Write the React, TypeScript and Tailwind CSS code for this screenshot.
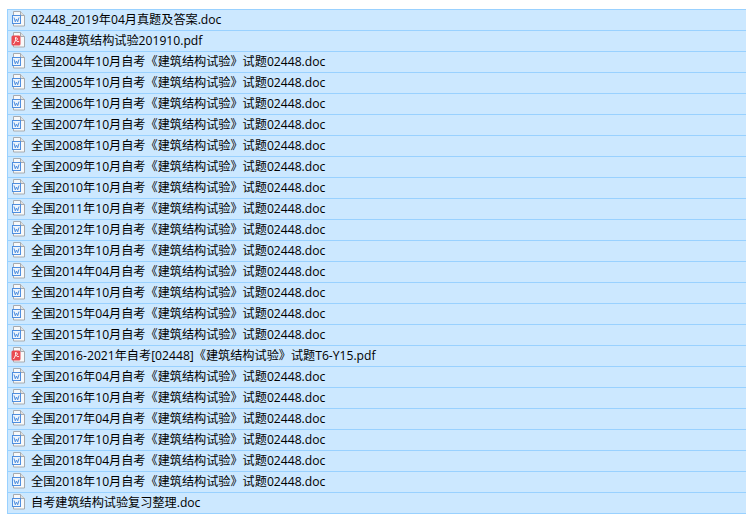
import React from 'react';

type FileRow = { name: string; kind: 'doc' | 'pdf' };

const exam = (term: string): FileRow => ({
  name: `全国${term}自考《建筑结构试验》试题02448.doc`,
  kind: 'doc',
});

const files: FileRow[] = [
  { name: '02448_2019年04月真题及答案.doc', kind: 'doc' },
  { name: '02448建筑结构试验201910.pdf', kind: 'pdf' },
  exam('2004年10月'),
  exam('2005年10月'),
  exam('2006年10月'),
  exam('2007年10月'),
  exam('2008年10月'),
  exam('2009年10月'),
  exam('2010年10月'),
  exam('2011年10月'),
  exam('2012年10月'),
  exam('2013年10月'),
  exam('2014年04月'),
  exam('2014年10月'),
  exam('2015年04月'),
  exam('2015年10月'),
  { name: '全国2016-2021年自考[02448]《建筑结构试验》试题T6-Y15.pdf', kind: 'pdf' },
  exam('2016年04月'),
  exam('2016年10月'),
  exam('2017年04月'),
  exam('2017年10月'),
  exam('2018年04月'),
  exam('2018年10月'),
  { name: '自考建筑结构试验复习整理.doc', kind: 'doc' },
];

const DocIcon = () => (
  <svg width="16" height="16" viewBox="0 0 16 16" className="mb-[2px] shrink-0">
    <path d="M3.5 0.5H10.5L14.5 4.5V15H3.5Z" fill="#f8f9fa" stroke="#a6aaaf" />
    <path d="M10.5 0.5V4.5H14.5" fill="#dfe1e3" stroke="#a6aaaf" />
    <rect x="2.5" y="4.5" width="8" height="8" fill="#eef5fc" stroke="#4f8fe0" />
    <path d="M4 6.5L5.3 10.8L6.5 8L7.7 10.8L9 6.5" fill="none" stroke="#4f8fe0" strokeWidth="1" />
  </svg>
);

const PdfIcon = () => (
  <svg width="16" height="16" viewBox="0 0 16 16" className="mb-[2px] shrink-0">
    <path d="M3.5 0.5H10.5L14.5 4.5V15H3.5Z" fill="#f8f9fa" stroke="#a6aaaf" />
    <path d="M10.5 0.5V4.5H14.5" fill="#dfe1e3" stroke="#a6aaaf" />
    <rect x="1.5" y="3.5" width="9" height="10" rx="1.5" fill="#ea4a52" />
    <path d="M3.5 12C5 10 6 8 5.5 5.5C7.5 5.5 7.8 7.5 6.5 8.5C6 9 7.5 9.8 8.8 9.5" fill="none" stroke="#ffffff" strokeWidth="1" />
  </svg>
);

export default function App() {
  return (
    <div className="h-[516px] w-[746px] overflow-hidden bg-white pl-[7px] pt-[9px] font-['Open_Sans','Noto_Sans_CJK_SC',sans-serif] text-[12.15px] text-black">
      <div className="border-b border-l border-[#99d1ff]">
        {files.map((file) => (
          <div
            key={file.name}
            className="flex h-[21px] items-center gap-[5px] border-t border-[#99d1ff] bg-[#cce8ff] pl-[2px]"
          >
            {file.kind === 'doc' ? <DocIcon /> : <PdfIcon />}
            <span className="whitespace-nowrap">{file.name}</span>
          </div>
        ))}
      </div>
    </div>
  );
}
